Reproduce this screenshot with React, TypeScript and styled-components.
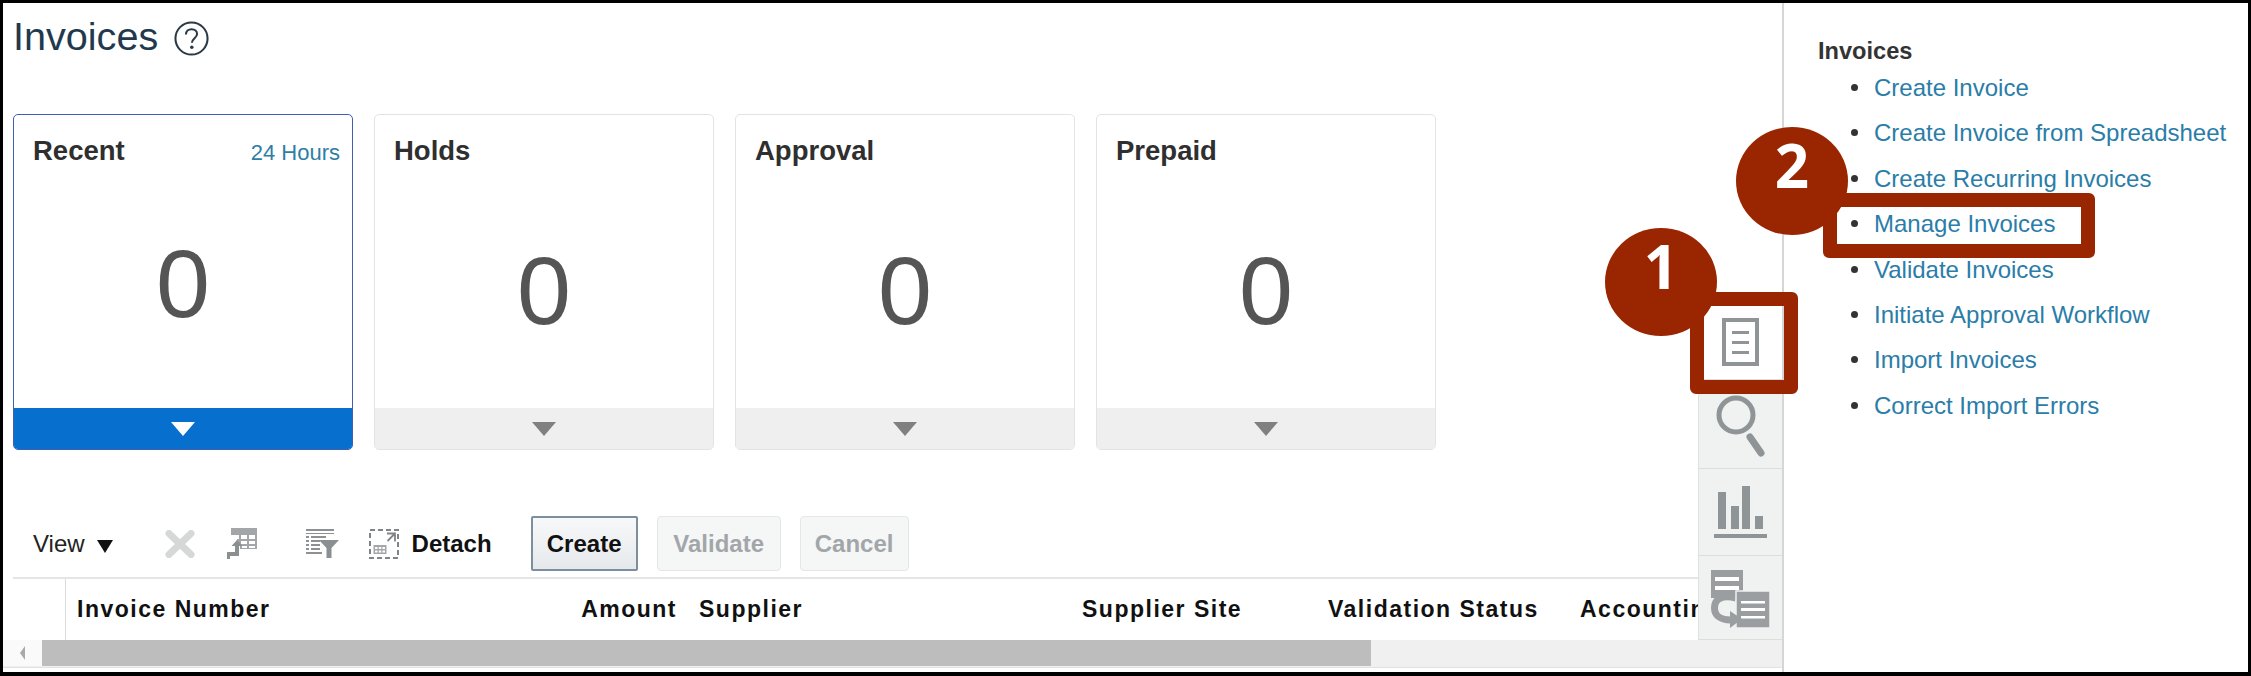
import { createGlobalStyle, styled } from "styled-components";

const GlobalStyle = createGlobalStyle`
    html, body {
        margin: 0;
        padding: 0;
        background: #fff;
    }

    body {
        font-family: "Liberation Sans", Arial, sans-serif;
    }
`;

const tiles = [
    { title: "Recent", active: true },
    { title: "Holds", active: false },
    { title: "Approval", active: false },
    { title: "Prepaid", active: false },
];

const tasks = [
    "Create Invoice",
    "Create Invoice from Spreadsheet",
    "Create Recurring Invoices",
    "Manage Invoices",
    "Validate Invoices",
    "Initiate Approval Workflow",
    "Import Invoices",
    "Correct Import Errors",
];

function HelpIcon() {
    return (
        <HelpSvg viewBox="0 0 34 34">
            <circle cx="17" cy="17" r="15.6" fill="none" stroke="#2b3a46" strokeWidth="2" />
            <path d="M11.6 13.2c0-3.3 2.4-5.2 5.5-5.2s5.3 1.9 5.3 4.6c0 4-5 4.2-5 8.6" fill="none" stroke="#2b3a46" strokeWidth="2" />
            <circle cx="17.3" cy="25.6" r="1.7" fill="#2b3a46" />
        </HelpSvg>
    );
}

function DeleteIcon() {
    return (
        <ToolSvg $left={52} width="30" height="28" viewBox="0 0 30 28">
            <path d="M4 3.5l22 21M26 3.5l-22 21" stroke="#d6d8d8" strokeWidth="7" strokeLinecap="round" />
        </ToolSvg>
    );
}

function FreezeIcon() {
    return (
        <ToolSvg $left={31} width="31" height="31" viewBox="0 0 31 31">
            <path d="M5 0h26v21H14v-4h-3V7H5z" fill="#a2a6a8" />
            <path d="M7 7h6v4H7zM15 7h6v4h-6zM23 7h6v4h-6zM15 13h6v3h-6zM23 13h6v3h-6zM23 18h6v2h-6zM16 18h5v2h-5z" fill="#fff" />
            <path d="M1 31v-7h8v-6H5.500L11 12l5.500 6H13v10H4v3z" fill="#8a8f92" />
        </ToolSvg>
    );
}

function FilterIcon() {
    return (
        <ToolSvg $left={49} width="33" height="29" viewBox="0 0 33 29">
            <path d="M0 0h28v2H0zM0 4h28v1H0zM0 7h3v2H0zM5 7h15v2H5zM0 11h3v2H0zM5 11h9v2H5zM0 15h3v2H0zM5 15h9v2H5zM0 19h3v2H0zM5 19h9v2H5zM0 23h16v2H0z" fill="#8d9194" />
            <path d="M13 11h20l-7.500 8v10h-5v-10z" fill="#8a8f92" />
        </ToolSvg>
    );
}

function DetachIcon() {
    return (
        <ToolSvg $left={30} width="30" height="30" viewBox="0 0 30 30">
            <rect x="1" y="1" width="28" height="28" fill="none" stroke="#7f8487" strokeWidth="2" strokeDasharray="5 3" />
            <path d="M18 4.500h8v8M25.500 5l-7 7" fill="none" stroke="#7f8487" strokeWidth="1.800" />
            <path d="M4.500 16h13v9h-13z" fill="#a3a7a9" />
            <path d="M6 18h2.500v2H6zM9.800 18h2.500v2H9.800zM13.500 18H16v2h-2.500zM6 21.500h2.500v2H6zM9.800 21.500h2.500v2H9.800zM13.500 21.500H16v2h-2.500z" fill="#fff" />
        </ToolSvg>
    );
}

function TasksIcon() {
    return (
        <svg width="37" height="48" viewBox="0 0 37 48">
            <rect x="2" y="2" width="33" height="44" fill="none" stroke="#8f9497" strokeWidth="4" />
            <path d="M10 13h17v3H10zM10 23h17v3H10zM10 33h17v3H10z" fill="#8f9497" />
        </svg>
    );
}

function SearchIcon() {
    return (
        <svg width="53" height="65" viewBox="0 0 53 65">
            <circle cx="22" cy="21" r="17" fill="none" stroke="#8f9497" strokeWidth="5" />
            <path d="M36 43l11 16" stroke="#8f9497" strokeWidth="7" strokeLinecap="round" />
        </svg>
    );
}

function ChartIcon() {
    return (
        <svg width="53" height="52" viewBox="0 0 53 52">
            <path d="M4 6h8v37H4zM17 20h8v23h-8zM28 0h8v43h-8zM41 30h8v13h-8zM0 48h53v4H0z" fill="#8f9497" />
        </svg>
    );
}

function ReportsIcon() {
    return (
        <svg width="59" height="58" viewBox="0 0 59 58">
            <path d="M0 0h32v28H0z" fill="#9a9ea0" />
            <path d="M4 7h24v4H4zM4 16h24v4H4z" fill="#fff" />
            <path d="M25 28C10 24 3.500 30 3.500 38c0 8 7 12 16 12" fill="none" stroke="#9a9ea0" strokeWidth="7" />
            <path d="M25 21h34v37H25z" fill="#9a9ea0" stroke="#f0f1f1" strokeWidth="1.500" />
            <path d="M30 31h24v2.500H30zM30 38h24v3H30zM30 46h24v2.500H30z" fill="#fff" />
            <path d="M19 41l12 8-12 9z" fill="#9a9ea0" />
        </svg>
    );
}

export default function App() {
    return (
        <Frame>
            <GlobalStyle />
            <Workspace>
                <Upper>
                    <Content>
                        <TitleRow>
                            <Title>Invoices</Title>
                            <HelpIcon />
                        </TitleRow>
                        <TileRow>
                            {tiles.map((tile) => (
                                <Tile key={tile.title} $active={tile.active}>
                                    <TileHead>
                                        <TileTitle>{tile.title}</TileTitle>
                                        {tile.active && <TileHint>24 Hours</TileHint>}
                                    </TileHead>
                                    <TileCount $active={tile.active}>0</TileCount>
                                    <TileFooter $active={tile.active}>
                                        <FooterArrow $active={tile.active} />
                                    </TileFooter>
                                </Tile>
                            ))}
                        </TileRow>
                        <Toolbar>
                            <ViewMenu>View</ViewMenu>
                            <ViewArrow />
                            <DeleteIcon />
                            <FreezeIcon />
                            <FilterIcon />
                            <DetachIcon />
                            <DetachLabel>Detach</DetachLabel>
                            <ToolButton $width={107} $left={39}>Create</ToolButton>
                            <ToolButton $width={124} $left={19} disabled>Validate</ToolButton>
                            <ToolButton $width={109} $left={19} disabled>Cancel</ToolButton>
                        </Toolbar>
                        <TableHeader>
                            <SelectorCell />
                            <HeaderCell>Invoice Number</HeaderCell>
                            <HeaderCell $right>Amount</HeaderCell>
                            <HeaderCell>Supplier</HeaderCell>
                            <HeaderCell>Supplier Site</HeaderCell>
                            <HeaderCell>Validation Status</HeaderCell>
                            <HeaderCell>Accounting</HeaderCell>
                        </TableHeader>
                    </Content>
                    <TabRail>
                        <RailTab $active $height={74}><TasksIcon /></RailTab>
                        <RailTab $height={90} $nudge={6}><SearchIcon /></RailTab>
                        <RailTab $height={87}><ChartIcon /></RailTab>
                        <RailTab $height={85} $nudge={3}><ReportsIcon /></RailTab>
                    </TabRail>
                </Upper>
                <ScrollTrack>
                    <ScrollButton />
                    <ScrollThumb />
                </ScrollTrack>
            </Workspace>
            <TaskPanel>
                <PanelTitle>Invoices</PanelTitle>
                <TaskList>
                    {tasks.map((task) => (
                        <TaskItem key={task}>{task}</TaskItem>
                    ))}
                </TaskList>
            </TaskPanel>

            <StepBadge $x={1605} $y={228}>1</StepBadge>
            <StepBox $x={1690} $y={292} $w={108} $h={102} />
            <StepBadge $x={1736} $y={127}>2</StepBadge>
            <StepBox $x={1823} $y={193} $w={272} $h={65} />
        </Frame>
    );
}

const Frame = styled.div`
    position: relative;
    box-sizing: border-box;
    width: 2251px;
    height: 676px;
    display: flex;
    overflow: hidden;
    background: #fff;
    border-style: solid;
    border-color: #000;
    border-width: 3px 3px 4px 3px;
`;

const Workspace = styled.main`
    width: 1779px;
    flex: none;
    display: flex;
    flex-direction: column;
`;

const Upper = styled.div`
    display: flex;
    height: 637px;
`;

const Content = styled.div`
    width: 1695px;
    flex: none;
    box-sizing: border-box;
    padding-left: 10px;
`;

const TitleRow = styled.header`
    height: 66px;
    display: flex;
    align-items: center;
    gap: 16px;
`;

const Title = styled.h1`
    margin: 0;
    font-size: 39.600px;
    font-weight: 400;
    color: #22394d;
`;

const HelpSvg = styled.svg`
    width: 35px;
    height: 35px;
    margin-top: 5px;
`;

const TileRow = styled.section`
    display: flex;
    gap: 21px;
    margin-top: 45px;
`;

const Tile = styled.article<{ $active: boolean }>`
    box-sizing: border-box;
    width: 340px;
    height: 336px;
    display: flex;
    flex-direction: column;
    overflow: hidden;
    border: 1px solid ${(p) => (p.$active ? "#3f5fb0" : "#e2e3e3")};
    border-radius: 5px;
`;

const TileHead = styled.div`
    height: 71px;
    box-sizing: border-box;
    padding: 20px 12px 0 19px;
    display: flex;
    justify-content: space-between;
    align-items: baseline;
`;

const TileTitle = styled.h2`
    margin: 0;
    font-size: 27.500px;
    font-weight: 700;
    color: #2f2f2f;
`;

const TileHint = styled.span`
    font-size: 22px;
    color: #2f7ea6;
`;

const TileCount = styled.div<{ $active: boolean }>`
    flex: 1;
    text-align: center;
    font-size: 97px;
    line-height: 110px;
    color: #555;
    padding-top: ${(p) => (p.$active ? "43px" : "50px")};
    box-sizing: border-box;
`;

const TileFooter = styled.div<{ $active: boolean }>`
    height: 41px;
    flex: none;
    display: flex;
    align-items: center;
    justify-content: center;
    background: ${(p) => (p.$active ? "#0770cf" : "#efefef")};
`;

const FooterArrow = styled.span<{ $active: boolean }>`
    width: 0;
    height: 0;
    border-style: solid;
    border-width: 14px 12px 0 12px;
    border-color: ${(p) => (p.$active ? "#fff" : "#808080")} transparent transparent transparent;
`;

const Toolbar = styled.div`
    height: 127px;
    box-sizing: border-box;
    padding: 66px 0 6px 20px;
    display: flex;
    align-items: center;
`;

const ViewMenu = styled.span`
    font-size: 24px;
    color: #222;
`;

const ViewArrow = styled.span`
    margin-left: 12px;
    margin-top: 6px;
    width: 0;
    height: 0;
    border-style: solid;
    border-width: 13px 8.500px 0 8.500px;
    border-color: #111 transparent transparent transparent;
`;

const ToolSvg = styled.svg<{ $left: number }>`
    flex: none;
    margin-left: ${(p) => p.$left}px;
`;

const DetachLabel = styled.span`
    margin-left: 13px;
    font-size: 24px;
    font-weight: 700;
    color: #111;
`;

const ToolButton = styled.button<{ $width: number; $left: number }>`
    box-sizing: border-box;
    width: ${(p) => p.$width}px;
    height: 55px;
    margin-left: ${(p) => p.$left}px;
    padding: 0;
    font-family: inherit;
    font-size: 24px;
    font-weight: 700;
    color: #111;
    border: 2px solid #7d8f9e;
    border-radius: 2px;
    background: linear-gradient(#f7f8f9, #e6e9ec);

    &:disabled {
        color: #a2a6a9;
        border: 1px solid #e4e6e7;
        border-radius: 4px;
        background: #f5f6f6;
    }
`;

const TableHeader = styled.div`
    height: 63px;
    box-sizing: border-box;
    display: grid;
    grid-template-columns: 53px 334px 288px 383px 246px 252px 1fr;
    border-top: 2px solid #e4e5e5;
    overflow: hidden;
`;

const SelectorCell = styled.div`
    border-right: 1px solid #dcdcdc;
`;

const HeaderCell = styled.div<{ $right?: boolean }>`
    padding: 0 11px;
    display: flex;
    align-items: center;
    justify-content: ${(p) => (p.$right ? "flex-end" : "flex-start")};
    white-space: nowrap;
    font-size: 23px;
    font-weight: 700;
    letter-spacing: 1.500px;
    color: #111;
`;

const TabRail = styled.nav`
    position: relative;
    z-index: 1;
    width: 84px;
    flex: none;
    margin-top: 303px;
    display: flex;
    flex-direction: column;
`;

const RailTab = styled.div<{ $active?: boolean; $height: number; $nudge?: number }>`
    box-sizing: border-box;
    height: ${(p) => p.$height}px;
    padding-top: ${(p) => p.$nudge ?? 0}px;
    display: flex;
    align-items: center;
    justify-content: center;
    background: ${(p) => (p.$active ? "#fff" : "#f0f1f1")};
    border-left: 1px solid #dfe0e0;
    border-bottom: 1px solid #dcdddd;
`;

const ScrollTrack = styled.div`
    height: 28px;
    box-sizing: border-box;
    display: flex;
    background: #f0f0f0;
    border-bottom: 1px solid #e2e2e2;
`;

const ScrollButton = styled.span`
    width: 39px;
    height: 26px;
    flex: none;
    display: flex;
    align-items: center;
    justify-content: center;
    background: #fafafa;

    &::before {
        content: "";
        border-style: solid;
        border-width: 7px 5px 7px 0;
        border-color: transparent #a9a9a9 transparent transparent;
    }
`;

const ScrollThumb = styled.span`
    width: 1329px;
    height: 26px;
    background: #bdbdbd;
`;

const TaskPanel = styled.aside`
    flex: 1;
    box-sizing: border-box;
    padding: 35px 0 0 34px;
    border-left: 2px solid #d5d6d6;
`;

const PanelTitle = styled.h3`
    margin: 0;
    font-size: 23.600px;
    line-height: 27px;
    font-weight: 700;
    color: #333;
`;

const TaskList = styled.ul`
    margin: 0;
    padding: 0 0 0 56px;
    list-style: none;
`;

const TaskItem = styled.li`
    position: relative;
    height: 45.400px;
    line-height: 45.400px;
    font-size: 24px;
    white-space: nowrap;
    color: #2a7da8;

    &::before {
        content: "";
        position: absolute;
        left: -23px;
        top: 19px;
        width: 7px;
        height: 7px;
        border-radius: 50%;
        background: #333;
    }
`;

const StepBadge = styled.div<{ $x: number; $y: number }>`
    position: absolute;
    z-index: 2;
    left: ${(p) => p.$x - 3}px;
    top: ${(p) => p.$y - 3}px;
    width: 112px;
    height: 108px;
    border-radius: 50%;
    background: #992600;
    color: #fff;
    font-family: "Open Sans", sans-serif;
    font-size: 60px;
    font-weight: 700;
    line-height: 76px;
    text-align: center;
`;

const StepBox = styled.div<{ $x: number; $y: number; $w: number; $h: number }>`
    position: absolute;
    z-index: 2;
    box-sizing: border-box;
    left: ${(p) => p.$x - 3}px;
    top: ${(p) => p.$y - 3}px;
    width: ${(p) => p.$w}px;
    height: ${(p) => p.$h}px;
    border: 14px solid #992600;
    border-radius: 6px;
`;
